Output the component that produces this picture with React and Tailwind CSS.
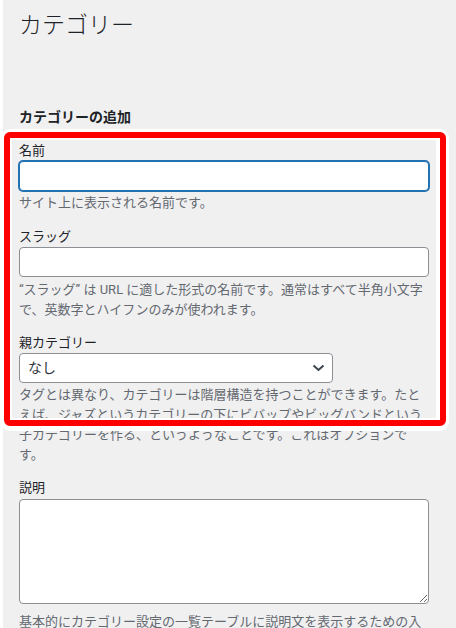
const font = { fontFamily: 'Roboto, "Noto Sans CJK JP", sans-serif' };

function Hint({ children, className = "" }) {
  return (
    <p className={`text-[13px] leading-[20px] text-[#646970] ${className}`}>
      {children}
    </p>
  );
}

function Label({ children, className = "" }) {
  return (
    <label className={`block text-[13px] leading-[20px] text-[#1d2327] ${className}`}>
      {children}
    </label>
  );
}

export default function App() {
  return (
    <div
      className="relative flex h-[628px] w-[456px] overflow-hidden bg-[#f0f0f1]"
      style={font}
    >
      <div className="w-[3px] shrink-0 bg-white" />

      <div className="flex-1 pl-[16px] pr-[27px]">
        <h1 className="pt-[11px] text-[23px] font-light leading-[30px] text-[#1d2327]">
          カテゴリー
        </h1>

        <h2 className="mt-[66px] text-[14px] font-semibold leading-[20px] text-[#1d2327]">
          カテゴリーの追加
        </h2>

        <Label className="mt-[14px]">名前</Label>
        <input
          type="text"
          className="block h-[30px] w-full rounded-[4px] border border-[#2271b1] bg-white px-2 shadow-[0_0_0_1px_#2271b1] outline-none"
        />
        <Hint className="mt-[2px]">サイト上に表示される名前です。</Hint>

        <Label className="mt-[14px]">スラッグ</Label>
        <input
          type="text"
          className="block h-[30px] w-full rounded-[4px] border border-[#8c8f94] bg-white px-2 outline-none"
        />
        <Hint className="mt-[3px]">
          “スラッグ” は URL に適した形式の名前です。通常はすべて半角小文字で、英数字とハイフンのみが使われます。
        </Hint>

        <Label className="mt-[13px]">親カテゴリー</Label>
        <div className="flex h-[30px] w-[314px] items-center justify-between rounded-[4px] border border-[#8c8f94] bg-white pl-[8px] pr-[7px] text-[14px] text-[#2c3338]">
          <span>なし</span>
          <svg width="13" height="8" viewBox="0 0 13 8" fill="none">
            <polyline
              points="1.5,1.5 6.5,6 11.5,1.5"
              stroke="#3c434a"
              strokeWidth="2"
            />
          </svg>
        </div>
        <Hint className="mt-[2px]">
          タグとは異なり、カテゴリーは階層構造を持つことができます。たとえば、ジャズというカテゴリーの下にビバップやビッグバンドという子カテゴリーを作る、というようなことです。これはオプションです。
        </Hint>

        <Label className="mt-[13px]">説明</Label>
        <textarea className="mt-[1px] block h-[105px] w-full rounded-[4px] border border-[#8c8f94] bg-white outline-none" />
        <Hint className="mt-[8px]">
          基本的にカテゴリー設定の一覧テーブルに説明文を表示するための入力欄です。
        </Hint>
      </div>

      {/* highlight overlay */}
      <div className="pointer-events-none absolute left-[1px] top-[129px] h-[302px] w-[448px] rounded-[9px] border-x-[3px] border-t-[3px] border-b-[5px] border-white">
        <div className="h-full w-full rounded-[6px] border-[6px] border-[#ff0000]">
          <div className="h-full w-full border-y-2 border-l-2 border-r-4 border-white" />
        </div>
      </div>
    </div>
  );
}
